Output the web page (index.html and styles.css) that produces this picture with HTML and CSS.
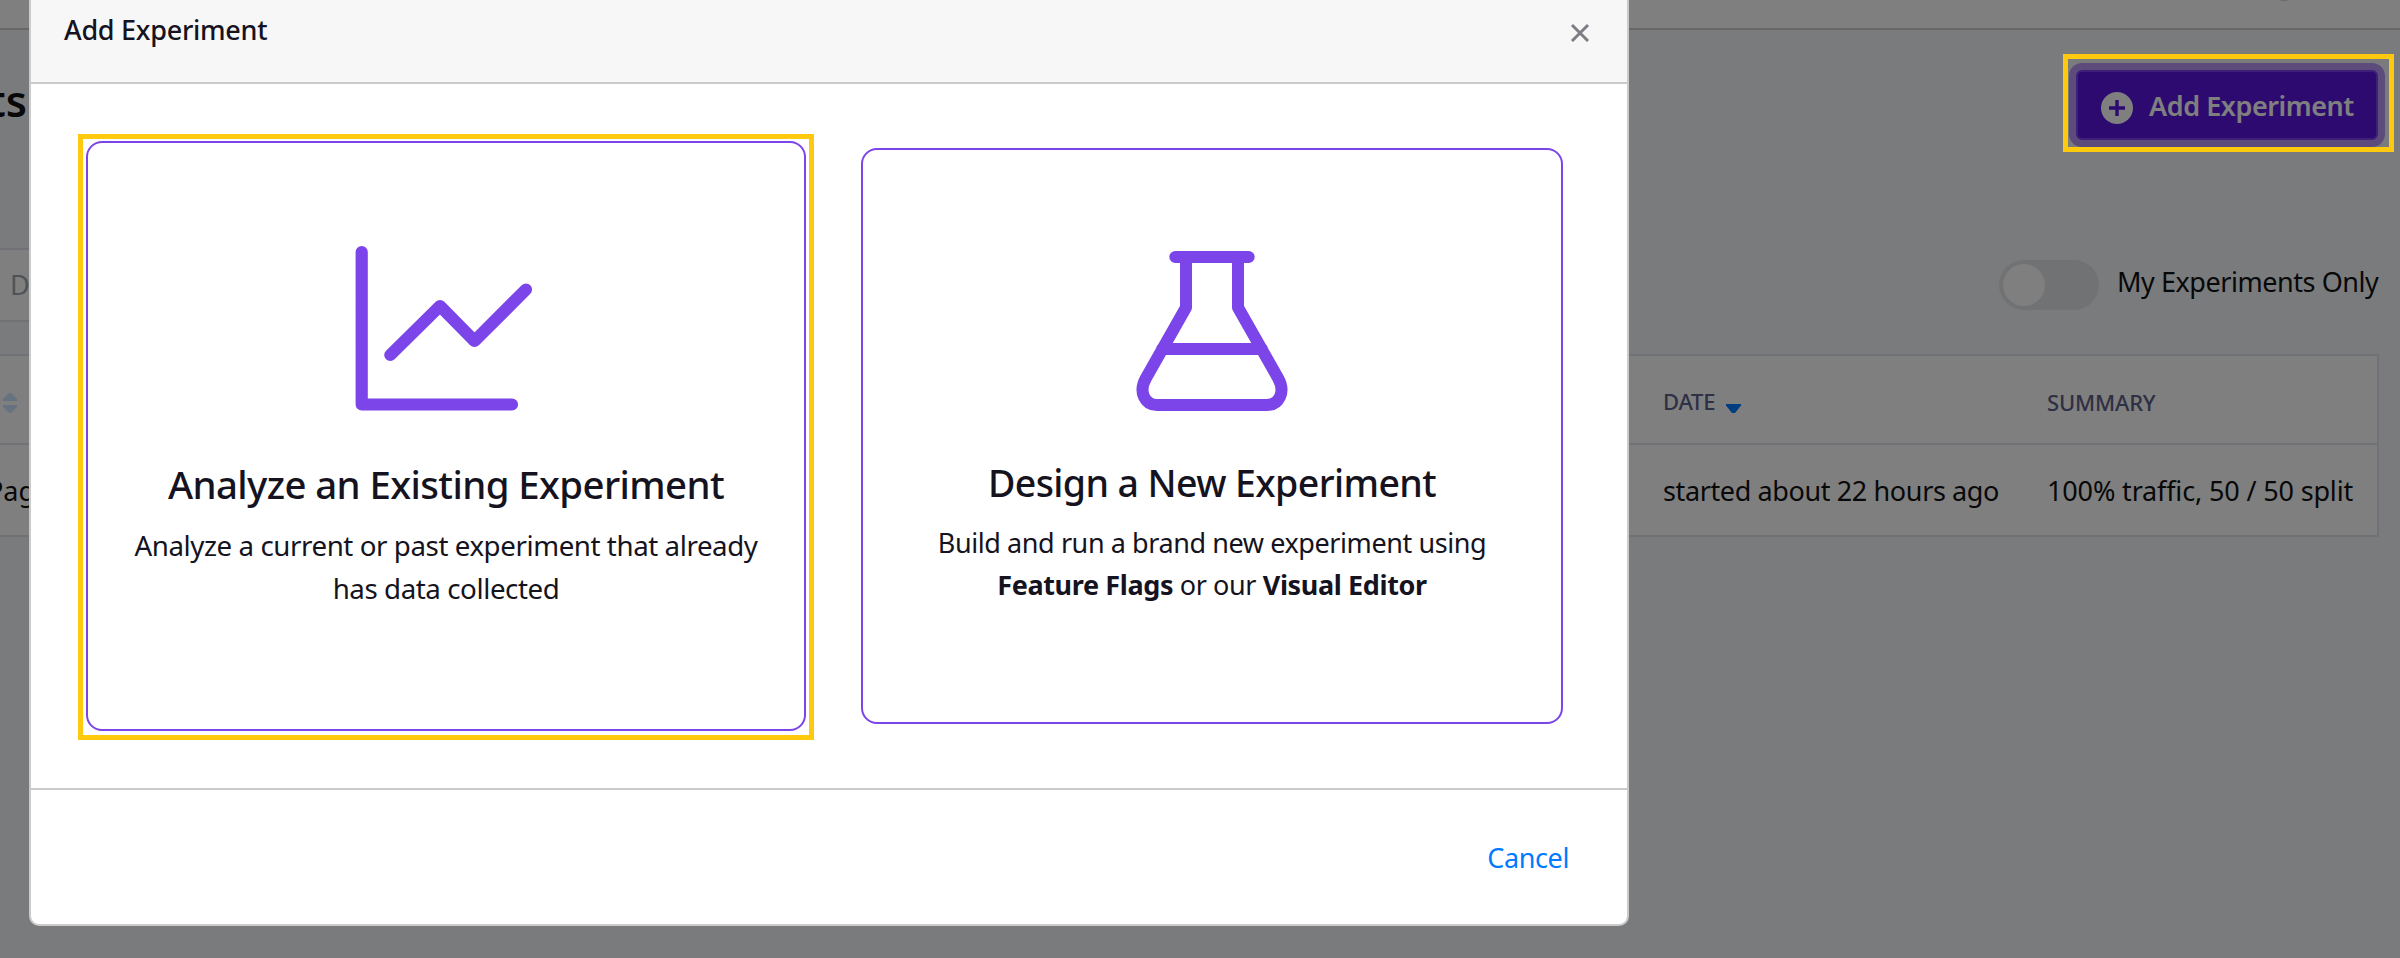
FILE: index.html
```
<!DOCTYPE html>
<html lang="en">
<head>
<meta charset="utf-8">
<title>Experiments</title>
<link rel="stylesheet" href="styles.css">
</head>
<body>
<div class="page">
  <header class="topbar"><span class="avatar"></span></header>
  <main class="content">
    <div class="heading-row">
      <h1 class="heading"><span class="t">ts</span></h1>
      <button class="add-button">
        <svg class="add-icon" viewBox="0 0 32 32"><circle cx="16" cy="16" r="16" fill="#fff"/><path d="M16 8v16M8 16h16" stroke="#5a14de" stroke-width="3.4"/></svg>
        <span class="t add-label">Add Experiment</span>
      </button>
    </div>
    <div class="filter-row">
      <div class="select"><span class="t">D</span></div>
      <div class="toggle-group">
        <span class="toggle"><span class="knob"></span></span>
        <span class="t toggle-label">My Experiments Only</span>
      </div>
    </div>
    <div class="table">
      <div class="row head">
        <div class="col-first"><svg class="sort" viewBox="0 0 14 20"><path d="M6 0h2l6 6v2H0V6zM0 12h14v2l-6 6H6l-6-6z" fill="#cce5ff"/></svg></div>
        <div class="col-date"><span class="t th-date">DATE</span><svg class="caret" viewBox="0 0 15 9"><path d="M0 0h15v1.5L9 9H6L0 1.5z" fill="#007bff"/></svg></div>
        <div class="col-summary"><span class="t th-sum">SUMMARY</span></div>
      </div>
      <div class="row">
        <div class="col-first"><span class="t page-name">Page</span></div>
        <div class="col-date"><span class="t td-date">started about 22 hours ago</span></div>
        <div class="col-summary"><span class="t td-sum">100% traffic, 50 / 50 split</span></div>
      </div>
    </div>
  </main>
</div>
<div class="backdrop"></div>
<div class="highlight highlight-button"></div>
<section class="modal">
  <div class="modal-head">
    <h2 class="modal-title"><span class="t">Add Experiment</span></h2>
    <svg class="close" viewBox="0 0 20 20"><path d="M2 2l16 16M18 2L2 18" stroke="#7e7d84" stroke-width="3"/></svg>
  </div>
  <div class="modal-body">
    <div class="highlight-card">
      <article class="card card-active">
        <svg class="card-icon chart" viewBox="355 245 178 167"><path d="M361.7 252v152.5H512M390.3 355L440 306l34.500 35L526 289.500" fill="none" stroke="#7c45ea" stroke-width="12.200" stroke-linecap="round" stroke-linejoin="round"/></svg>
        <h3 class="card-title"><span class="t">Analyze an Existing Experiment</span></h3>
        <p class="card-text"><span class="t">Analyze a current or past experiment that already</span><br><span class="t">has data collected</span></p>
      </article>
    </div>
    <article class="card">
      <svg class="card-icon flask" viewBox="1136 251 152 160"><path d="M1175.300 257h73.400M1186 257v50.500l-40 70.500C1138 392 1145 405 1157 405h110c12 0 19-13 11-27l-40-70.500V257M1162 349h100" fill="none" stroke="#7c45ea" stroke-width="12" stroke-linecap="round" stroke-linejoin="round"/></svg>
      <h3 class="card-title"><span class="t">Design a New Experiment</span></h3>
      <p class="card-text"><span class="t">Build and run a brand new experiment using</span><br><span class="t rich"><b>Feature Flags</b> or our <b>Visual Editor</b></span></p>
    </article>
  </div>
  <div class="modal-foot"><span class="t cancel">Cancel</span></div>
</section>
</body>
</html>
```
FILE: styles.css
```
* { box-sizing: border-box; }
body { margin: 0; width: 2400px; height: 958px; overflow: hidden; position: relative; font-family: "Noto Sans", sans-serif; font-size: 27px; color: #111; background: #f5f7fa; }
h1, h2, h3, p { margin: 0; }
.t { white-space: nowrap; }

.topbar { height: 30px; background: #fff; border-bottom: 2px solid #ccc; overflow: hidden; padding-left: 2268px; }
.avatar { display: block; width: 32px; height: 32px; margin-top: -31px; border-radius: 50%; background: #d5d5d5; }
.heading-row { display: flex; justify-content: space-between; height: 218px; padding: 40px 22px 0 0; }
.heading { width: 27px; display: flex; justify-content: flex-end; font-size: 43px; font-weight: 600; line-height: 62px; height: 62px; }
.add-button { display: flex; align-items: center; gap: 16px; width: 302px; height: 70px; padding: 0 0 0 23px; border: 2px solid #7e40f0; border-radius: 6px; background: #5a14de; box-shadow: 0 0 0 7px #bb97f9; color: #fff; font: 600 27px "Noto Sans", sans-serif; }
.add-icon { width: 32px; height: 32px; margin-top: 6px; }
.add-label { letter-spacing: -.45px; padding-top: 1px; }
.filter-row { display: flex; justify-content: space-between; height: 106px; padding-right: 21px; }
.select { width: 400px; height: 74px; padding-left: 10px; border: 2px solid #e2e4ea; border-left: 0; background: #fff; color: #9da6b0; line-height: 69px; }
.toggle-group { display: flex; gap: 18px; height: 50px; margin-top: 12px; }
.toggle { width: 100px; height: 50px; padding: 4px; border-radius: 25px; background: #e2e4e8; }
.knob { display: block; width: 42px; height: 42px; border-radius: 50%; background: #fff; }
.toggle-label { line-height: 44px; width: 262px; letter-spacing: -.45px; }
.table { width: 2379px; height: 183px; border: 2px solid #e2e4ea; border-left: 0; background: #fff; }
.row { display: grid; grid-template-columns: 1663px 384px 1fr; height: 90px; align-items: center; }
.head { height: 89px; border-bottom: 2px solid #e2e4ea; color: #5c6088; font-size: 22px; font-weight: 500; letter-spacing: -.2px; }
.th-date, .th-sum { line-height: 30px; }
.col-first { display: flex; }
.head .col-date { display: flex; align-items: flex-end; padding-top: 2px; }
.head .col-summary { padding-top: 4px; }
.sort { width: 14px; height: 20px; margin-left: 3px; margin-top: 6px; }
.caret { width: 15px; height: 9px; margin: 0 0 3px 11px; }
.page-name { margin-left: -13px; }
.td-date { letter-spacing: -.38px; }
.td-sum { letter-spacing: -.15px; }

.backdrop { position: absolute; inset: 0; background: rgba(0, 0, 0, .5); }
.highlight { position: absolute; border: 5px solid #ffc90e; }
.highlight-button { left: 2063px; top: 54px; width: 331px; height: 98px; }

.modal { position: absolute; left: 29px; top: -20px; width: 1600px; height: 946px; border: 2px solid #cbcbcb; border-radius: 10px; background: #fff; color: #151320; overflow: hidden; }
.modal-head { display: flex; justify-content: space-between; height: 102px; padding: 18px 37px 0 33px; background: #f7f7f7; border-bottom: 2px solid #cbcbcb; }
.modal-title { font-size: 27px; font-weight: 500; line-height: 60px; letter-spacing: -.28px; }
.close { width: 20px; height: 20px; margin-top: 23px; }
.modal-body { display: flex; gap: 47px; height: 704px; padding: 50px 0 0 47px; }
.highlight-card { width: 736px; height: 606px; padding: 2px 3px; border: 5px solid #ffc90e; }
.card { display: flex; flex-direction: column; align-items: center; width: 702px; height: 576px; margin-top: 14px; padding-top: 101px; border: 2px solid #7c45ea; border-radius: 16px; }
.card-active { width: 720px; height: 590px; margin: 0; padding-top: 102px; }
.card-icon { display: block; }
.chart { width: 178px; height: 167px; margin-right: 4px; }
.flask { width: 152px; height: 160px; }
.card-title { font-size: 37.5px; font-weight: 500; line-height: 56px; letter-spacing: -.6px; margin-top: 44px; }
.card-text { line-height: 42px; letter-spacing: -.42px; text-align: center; margin-top: 11px; }
.rich { letter-spacing: -.38px; }
.card-active .card-title { font-size: 38.4px; margin-top: 44px; }
.card-active .card-text { font-size: 27.7px; line-height: 43px; margin-top: 12px; }
.modal-foot { height: 138px; border-top: 2px solid #cbcbcb; padding: 48px 58px 0 0; text-align: right; line-height: 40px; color: #007bff; }
.cancel { letter-spacing: -.4px; }
```
